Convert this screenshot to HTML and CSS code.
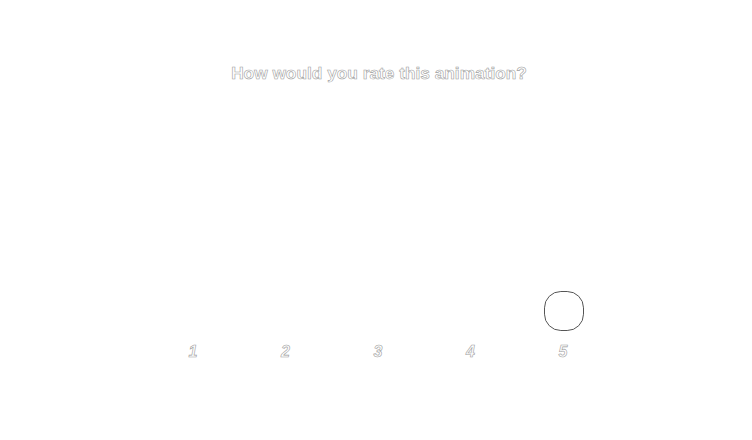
FILE: index.html
```html
<!DOCTYPE html>
<html>
<head>
<meta charset="utf-8">
<link rel="stylesheet" href="styles.css">
</head>
<body>
<main class="page">
  <h1 class="title">How would you rate this animation?</h1>
  <div class="rating">
    <div class="option"><span class="knob-slot"></span><span class="num">1</span></div>
    <div class="option"><span class="knob-slot"></span><span class="num">2</span></div>
    <div class="option"><span class="knob-slot"></span><span class="num">3</span></div>
    <div class="option"><span class="knob-slot"></span><span class="num">4</span></div>
    <div class="option"><span class="knob-slot"><span class="knob"></span></span><span class="num">5</span></div>
  </div>
</main>
</body>
</html>
```
FILE: styles.css
```css
html, body {
  margin: 0;
  padding: 0;
  background: #ffffff;
}
.page {
  width: 752px;
  height: 440px;
  display: flex;
  flex-direction: column;
  align-items: center;
  font-family: "Liberation Sans", Arial, sans-serif;
}
.title {
  margin: 62px 0 0 6px;
  font-size: 17.3px;
  font-weight: bold;
  line-height: 22px;
  color: #ffffff;
  -webkit-text-stroke: 0.6px #a0a0a0;
}
.rating {
  margin-top: 207px;
  display: flex;
  margin-left: 4px;
}
.option {
  width: 92.5px;
  display: flex;
  flex-direction: column;
  align-items: center;
}
.knob-slot {
  width: 40px;
  height: 40px;
  display: block;
}
.knob {
  display: block;
  width: 40px;
  height: 40px;
  margin-left: 1px;
  box-sizing: border-box;
  border: 1px solid #555;
  border-radius: 42%;
  background: #fff;
}
.num {
  margin-top: 11px;
  font-size: 16px;
  font-weight: bold;
  font-style: italic;
  line-height: 20px;
  color: #ffffff;
  -webkit-text-stroke: 0.6px #a0a0a0;
}
```
